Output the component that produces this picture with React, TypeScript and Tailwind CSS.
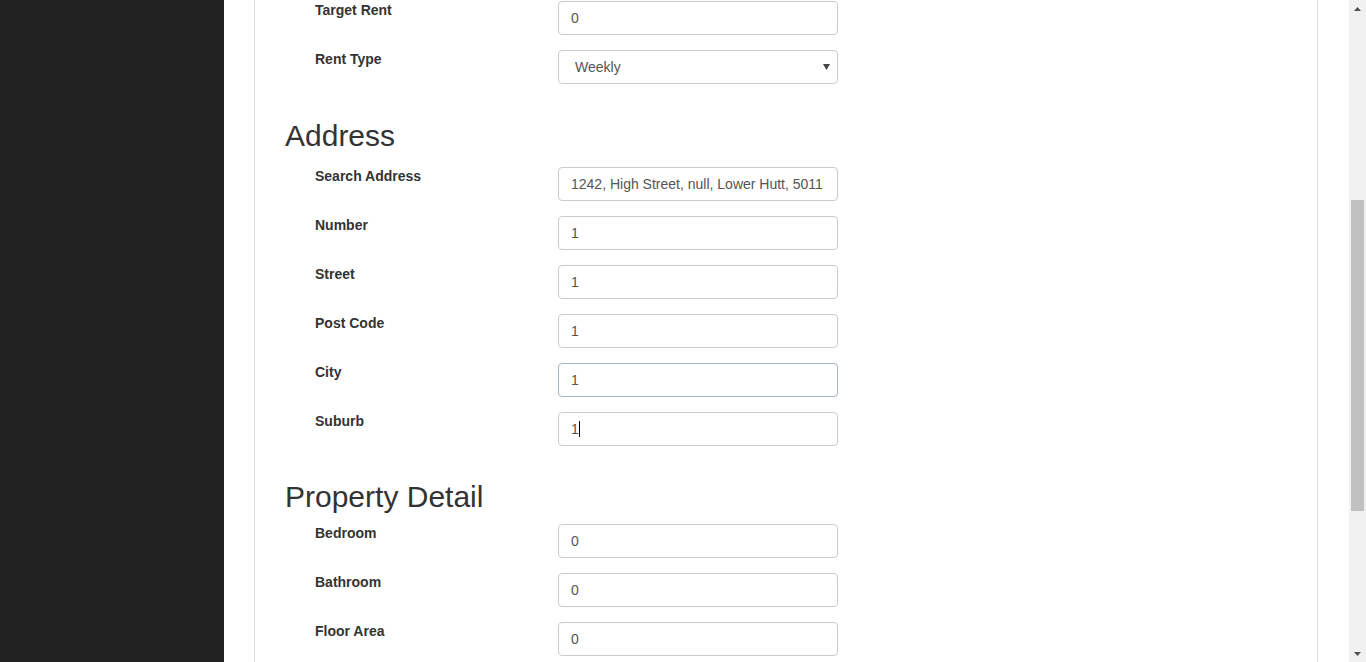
import React from "react";

const font = { fontFamily: '"Liberation Sans", Arial, Helvetica, sans-serif' };

function Field({
  label,
  value,
  select,
  border = "border-[#cccccc]",
  caret,
}: {
  label: string;
  value: string;
  select?: boolean;
  border?: string;
  caret?: boolean;
}) {
  return (
    <div className="flex items-start h-[34px] mb-[15px]">
      <div className="w-[273px] pl-[30px] text-[14px] leading-[18px] font-bold text-[#333333]">
        {label}
      </div>
      <div
        className={`relative w-[280px] h-[34px] border ${border} rounded-[4px] bg-white flex items-center overflow-hidden whitespace-nowrap text-[14px] text-[#555555] ${
          select ? "pl-[16px]" : "pl-[12px]"
        } pr-[10px]`}
      >
        <span>{value}</span>
        {caret && <span className="inline-block w-[1px] h-[16px] bg-black" />}
        {select && (
          <svg
            className="absolute right-[7px] top-[13px]"
            width="7"
            height="6"
            viewBox="0 0 7 6"
          >
            <path d="M0 0 L7 0 L3.5 6 Z" fill="#444" />
          </svg>
        )}
      </div>
    </div>
  );
}

function Heading({ text, mt, mb }: { text: string; mt: string; mb: string }) {
  return (
    <h2
      className={`text-[30px] leading-[33px] font-normal text-[#333333] ${mt} ${mb}`}
    >
      {text}
    </h2>
  );
}

export default function App() {
  return (
    <div className="flex h-[662px] w-[1366px] overflow-hidden bg-white" style={font}>
      <div className="w-[224px] h-full bg-[#222222] shrink-0" />
      <div className="flex-1 h-full pl-[30px]">
        <div className="w-[1064px] h-full border-l border-r border-[#dddddd] pl-[30px] pt-[1px]">
          <Field label="Target Rent" value="0" />
          <Field label="Rent Type" value="Weekly" select />
          <Heading text="Address" mt="mt-[35px]" mb="mb-[15px]" />
          <Field label="Search Address" value="1242, High Street, null, Lower Hutt, 5011" />
          <Field label="Number" value="1" />
          <Field label="Street" value="1" />
          <Field label="Post Code" value="1" />
          <Field label="City" value="1" border="border-[#a8b6c6]" />
          <Field label="Suburb" value="1" caret />
          <Heading text="Property Detail" mt="mt-[34px]" mb="mb-[11px]" />
          <Field label="Bedroom" value="0" />
          <Field label="Bathroom" value="0" />
          <Field label="Floor Area" value="0" />
        </div>
      </div>
      <div className="w-[17px] h-full bg-[#f1f1f1] shrink-0 flex flex-col items-center">
        <div className="h-[17px] w-full flex items-center justify-center">
          <svg width="7" height="4" viewBox="0 0 7 4">
            <path d="M0 4 L7 4 L3.5 0 Z" fill="#505050" />
          </svg>
        </div>
        <div className="h-[183px]" />
        <div className="w-[13px] h-[311px] bg-[#c1c1c1]" />
        <div className="flex-1" />
        <div className="h-[17px] w-full flex items-center justify-center">
          <svg width="7" height="4" viewBox="0 0 7 4">
            <path d="M0 0 L7 0 L3.5 4 Z" fill="#505050" />
          </svg>
        </div>
      </div>
    </div>
  );
}
